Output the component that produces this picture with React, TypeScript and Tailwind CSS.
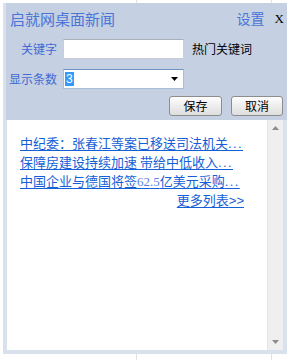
const cjk = { fontFamily: '"SimSun", "Noto Sans CJK SC", sans-serif' };
const latin = { fontFamily: '"Liberation Sans", sans-serif' };

function Dots() {
  return (
    <span className="tracking-[1.4px]" style={latin}>
      ...
    </span>
  );
}

function NewsLink({ children }: { children: React.ReactNode }) {
  return (
    <div className="h-[19px] leading-[19px] whitespace-pre">
      <a href="#" className="text-[13px] text-[#1560d6] underline underline-offset-[2px]">
        {children}
      </a>
    </div>
  );
}

export default function App() {
  return (
    <div className="w-[292px] h-[360px] bg-white flex flex-col" style={cjk}>
      {/* page behind the widget */}
      <div className="h-[3px] flex">
        <div className="w-[137px] border-r border-[#e2e2e2]" />
        <div className="w-[135px] border-r border-[#e2e2e2]" />
      </div>

      <div className="ml-[3px] w-[284px] h-[351px] bg-[#c5d1e3] flex flex-col">
        {/* settings area */}
        <div className="border-l-[3px] border-[#d9e1ed] pt-[4px] pb-[4px] flex flex-col">
          <div className="h-[22px] flex items-center pl-[4px] pr-[3px]">
            <span className="text-[15px] text-[#4a74d8] leading-none">启就网桌面新闻</span>
            <span className="ml-auto text-[14px] text-[#4a74d8] leading-none">设置</span>
            <span className="ml-[10px] text-[13px] text-black leading-none" style={{ fontFamily: '"Liberation Serif", serif' }}>
              X
            </span>
          </div>

          <div className="mt-[10px] flex items-center h-[20px]">
            <label className="w-[51px] text-right text-[12px] text-[#4169d4]">关键字</label>
            <input className="ml-[6px] w-[121px] h-[20px] bg-white border border-[#c9ced6] border-t-[#a9b0ba] outline-none" />
            <span className="ml-[8px] text-[12px] text-black">热门关键词</span>
          </div>

          <div className="mt-[10px] flex items-center h-[20px]">
            <label className="w-[51px] text-right text-[12px] text-[#4169d4]">显示条数</label>
            <div className="ml-[6px] w-[121px] h-[20px] bg-white border border-[#a9bed8] border-t-[#6f93c4] flex items-center pl-[1px] pr-[5px]">
              <span className="bg-[#3399ff] text-white text-[12px] leading-[14px] px-[1px]" style={latin}>
                3
              </span>
              <svg className="ml-auto" width="7" height="4" viewBox="0 0 7 4">
                <path d="M0 0H7L3.5 4Z" fill="#000" />
              </svg>
            </div>
          </div>

          <div className="mt-[7px] flex justify-end gap-[9px] pr-[4px]">
            <button className="w-[53px] h-[20px] rounded-[3px] border border-[#8d8d8d] bg-gradient-to-b from-[#fdfdfd] to-[#dedede] text-[12px] text-black leading-none">
              保存
            </button>
            <button className="w-[52px] h-[20px] rounded-[3px] border border-[#8d8d8d] bg-gradient-to-b from-[#fdfdfd] to-[#dedede] text-[12px] text-black leading-none">
              取消
            </button>
          </div>
        </div>

        {/* news list */}
        <div className="flex-1 border-x-[4px] border-b-[4px] border-[#d9e1ed] bg-white flex">
          <div className="flex-1 pl-[13px] pt-[12px]">
            <div className="w-[224px] flex flex-col">
              <NewsLink>
                中纪委：张春江等案已移送司法机关<Dots />
              </NewsLink>
              <NewsLink>
                保障房建设持续加速 带给中低收入<Dots />
              </NewsLink>
              <NewsLink>
                中国企业与德国将签
                <span className="text-[#5b82e3]" style={{ fontFamily: '"Liberation Serif", serif' }}>
                  62.5
                </span>
                亿美元采购<Dots />
              </NewsLink>
              <div className="h-[19px] leading-[19px] text-right">
                <a href="#" className="text-[13px] text-[#1560d6] underline underline-offset-[2px]">
                  更多列表<span style={latin}>&gt;&gt;</span>
                </a>
              </div>
            </div>
          </div>
          <div className="w-[16px] bg-[#efefef] border-l border-[#e4e4e4] flex flex-col items-center justify-between py-[6px]">
            <svg width="7" height="4" viewBox="0 0 7 4">
              <path d="M3.5 0L7 4H0Z" fill="#8c8c8c" />
            </svg>
            <svg width="7" height="4" viewBox="0 0 7 4">
              <path d="M0 0H7L3.5 4Z" fill="#8c8c8c" />
            </svg>
          </div>
        </div>
      </div>

      <div className="flex-1 flex">
        <div className="w-[137px] border-r border-[#e2e2e2]" />
        <div className="w-[135px] border-r border-[#e2e2e2]" />
      </div>
    </div>
  );
}
